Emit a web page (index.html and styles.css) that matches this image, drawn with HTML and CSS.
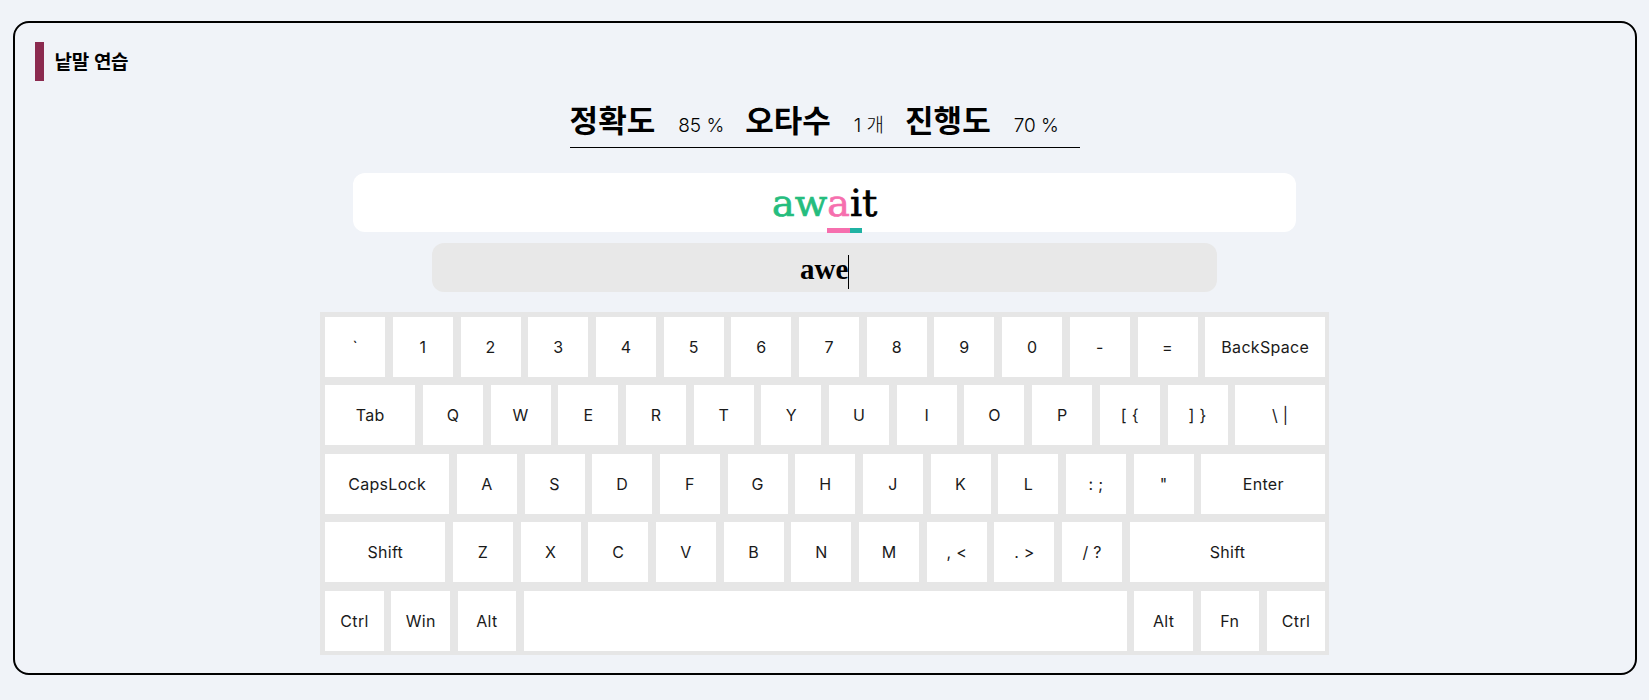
FILE: index.html
```html
<!DOCTYPE html>
<html lang="ko">
<head>
<meta charset="utf-8">
<title>낱말 연습</title>
<link rel="stylesheet" href="styles.css">
</head>
<body>
<main class="card">
  <header class="title-row">
    <span class="title-bar"></span>
    <h1 class="title">낱말 연습</h1>
  </header>

  <section class="stats-wrap">
    <div class="stats">
      <span class="stat-label">정확도</span><span class="stat-value">85 %</span>
      <span class="stat-label">오타수</span><span class="stat-value">1 개</span>
      <span class="stat-label">진행도</span><span class="stat-value">70 %</span>
    </div>
  </section>

  <div class="word-box">
    <span class="ch ok">a</span><span class="ch ok">w</span><span class="ch bad mark-pink">a</span><span class="ch next mark-teal">i</span><span class="ch">t</span>
  </div>

  <div class="input-box">
    <span class="typed">awe</span><span class="caret"></span>
  </div>

  <div class="keyboard">
    <div class="row">
      <div class="key">`</div><div class="key">1</div><div class="key">2</div><div class="key">3</div><div class="key">4</div><div class="key">5</div><div class="key">6</div><div class="key">7</div><div class="key">8</div><div class="key">9</div><div class="key">0</div><div class="key">-</div><div class="key">=</div><div class="key grow">BackSpace</div>
    </div>
    <div class="row">
      <div class="key grow">Tab</div><div class="key">Q</div><div class="key">W</div><div class="key">E</div><div class="key">R</div><div class="key">T</div><div class="key">Y</div><div class="key">U</div><div class="key">I</div><div class="key">O</div><div class="key">P</div><div class="key">[ {</div><div class="key">] }</div><div class="key grow">\ |</div>
    </div>
    <div class="row">
      <div class="key grow">CapsLock</div><div class="key">A</div><div class="key">S</div><div class="key">D</div><div class="key">F</div><div class="key">G</div><div class="key">H</div><div class="key">J</div><div class="key">K</div><div class="key">L</div><div class="key">: ;</div><div class="key">"</div><div class="key grow">Enter</div>
    </div>
    <div class="row">
      <div class="key shift-l">Shift</div><div class="key">Z</div><div class="key">X</div><div class="key">C</div><div class="key">V</div><div class="key">B</div><div class="key">N</div><div class="key">M</div><div class="key">, &lt;</div><div class="key">. &gt;</div><div class="key">/ ?</div><div class="key grow">Shift</div>
    </div>
    <div class="row">
      <div class="key small">Ctrl</div><div class="key small">Win</div><div class="key small">Alt</div><div class="key grow"></div><div class="key small">Alt</div><div class="key small">Fn</div><div class="key small">Ctrl</div>
    </div>
  </div>
</main>
</body>
</html>
```

FILE: styles.css
```css
* { box-sizing: border-box; }

html, body {
  margin: 0;
  padding: 0;
  background: #f0f3f8;
}

body {
  padding: 21px 12px 0 12.5px;
  font-family: "Noto Sans CJK KR", "Noto Sans", sans-serif;
  color: #000;
}

.card {
  border: 2px solid #000;
  border-radius: 16px;
  height: 654px;
  padding: 19px 20px 0 20px;
  display: flex;
  flex-direction: column;
  align-items: center;
}

.title-row {
  align-self: stretch;
  display: flex;
  align-items: center;
  gap: 11px;
  height: 39px;
}

.title-bar {
  width: 9px;
  height: 39px;
  background: #8b2a4f;
}

.title {
  margin: 0 0 3px 0;
  font-size: 19px;
  font-weight: 700;
  line-height: 1;
  letter-spacing: -0.3px;
}

.stats-wrap {
  margin-top: 17px;
  display: flex;
  justify-content: center;
}

.stats {
  display: flex;
  align-items: baseline;
  border-bottom: 1px solid #000;
  padding-bottom: 7px;
}

.stat-label {
  font-family: "Noto Sans CJK KR", sans-serif;
  font-weight: 700;
  font-size: 31px;
  line-height: 42px;
  margin-right: 23px;
}

.stat-value {
  font-family: Inter, "Noto Sans CJK KR", sans-serif;
  font-weight: 300;
  font-size: 19px;
  margin-right: 21px;
}

.word-box {
  margin-top: 25px;
  width: 943px;
  height: 59px;
  background: #fff;
  border-radius: 12px;
  display: flex;
  justify-content: center;
  align-items: flex-end;
}

.ch {
  display: inline-block;
  font-family: "DejaVu Serif", serif;
  font-size: 38px;
  line-height: 44px;
  padding-bottom: 3px;
  border-bottom: 5px solid transparent;
  margin-bottom: -1px;
  color: #000;
  -webkit-text-stroke: 0.7px currentColor;
}

.ch.ok { color: #25bd7e; }
.ch.bad { color: #f66fae; }
.mark-pink { border-bottom-color: #f66fae; }
.mark-teal { border-bottom-color: #1fb2a3; }

.input-box {
  margin-top: 11px;
  width: 785px;
  height: 49px;
  background: #e8e8e8;
  border-radius: 12px;
  display: flex;
  justify-content: center;
  align-items: center;
}

.typed {
  font-family: "Liberation Serif", serif;
  font-weight: 700;
  font-size: 29px;
  line-height: 34px;
  margin-top: 3px;
}

.caret {
  width: 1px;
  height: 34px;
  background: #000;
  margin-top: 9px;
}

.keyboard {
  margin-top: 20px;
  width: 1009px;
  background: #e6e6e6;
  padding: 4.5px 4px 4px 5px;
  display: flex;
  flex-direction: column;
  gap: 8.6px;
}

.row {
  display: flex;
  gap: 7.7px;
}

.key {
  width: 60px;
  height: 60px;
  flex: none;
  background: #fff;
  display: flex;
  align-items: center;
  justify-content: center;
  font-family: Inter, "Liberation Sans", sans-serif;
  font-size: 16px;
  letter-spacing: 0.3px;
  color: #1a1a1a;
  white-space: pre;
}

.key.grow { flex: 1 1 0; width: auto; }
.key.shift-l { width: 120px; }
.key.small { width: 58.5px; }
```
